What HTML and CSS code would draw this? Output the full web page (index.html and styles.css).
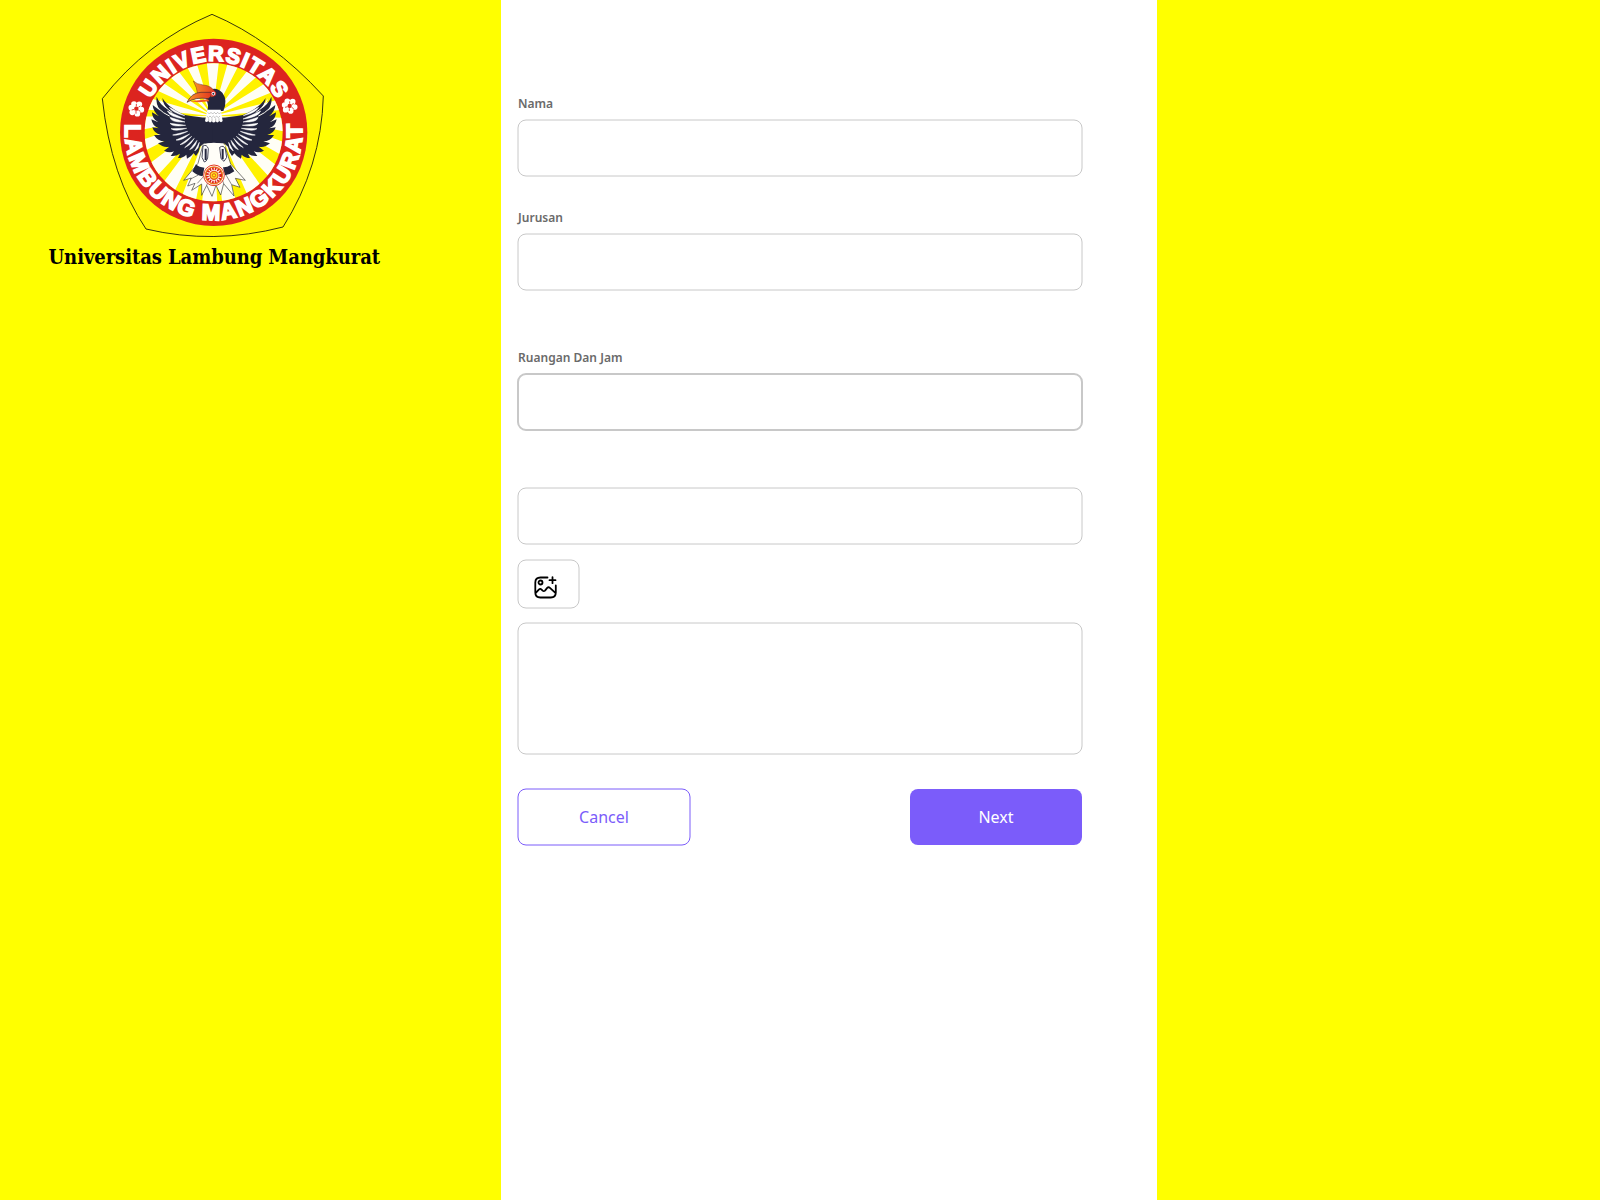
FILE: index.html
```html
<!DOCTYPE html>
<html lang="id">
<head>
<meta charset="utf-8">
<title>Universitas Lambung Mangkurat</title>
<link rel="stylesheet" href="styles.css">
</head>
<body>
<div class="page">
  <aside class="brand">
    <svg class="crest" viewBox="0 0 750 720" role="img" aria-label="Universitas Lambung Mangkurat">
      <defs>
        <path id="arc-top" d="M157 397a214 214 0 0 1 428 0"/>
        <path id="arc-bottom" d="M110 343A266 266 0 1 0 632 343"/>
        <clipPath id="disc"><circle cx="371" cy="397" r="207"/></clipPath>
        <linearGradient id="beak" x1="0" x2="1"><stop offset="0" stop-color="#f9922a"/><stop offset="1" stop-color="#e3391f"/></linearGradient>
        <g id="flower">
          <g fill="#fff">
            <circle cx="-7" cy="-14" r="8.5"/>
            <circle cx="9" cy="-13" r="8.5"/>
            <circle cx="15" cy="3" r="8.5"/>
            <circle cx="3" cy="15" r="8.5"/>
            <circle cx="-12" cy="11" r="8.5"/>
            <circle cx="-15" cy="-3" r="8.5"/>
            <circle r="12"/>
          </g>
          <path d="M0-14V-7M12-8L6-4M12 8L6 4M-1 15V7M-14 4L-6 2" stroke="#dc241f" stroke-width="2.5"/>
          <circle r="6.5" fill="#dc241f"/>
        </g>
        <g id="wing">
          <path d="M376 352C345 356 318 350 285 345C250 330 232 316 217 294Q219 312 233 328Q208 312 200 290Q196 310 211 332L188 315Q189 334 207 349L186 337Q186 357 205 367L184 358Q187 378 206 385L187 382Q192 400 212 405L192 405Q203 424 224 424L204 430Q220 444 238 440L222 452Q238 460 252 454L242 468Q258 470 270 461L264 474Q279 474 289 464L291 476Q304 470 311 460L318 468Q328 455 330 440L342 430H376Z" fill="#24263d"/>
          <g fill="#fff">
            <path d="M284 347L238 322Q246 338 284 347ZM285 357L232 333Q240 352 285 357ZM285 366L240 352Q242 368 285 366ZM287 376L240 370Q248 382 287 376ZM290 385L243 386Q255 396 290 385ZM293 394L248 405Q264 409 293 394ZM299 402L258 420Q273 424 299 402ZM305 409L270 434Q285 434 305 409ZM313 415L284 443Q301 438 313 415ZM321 421L299 449Q316 443 321 421ZM328 427L314 453Q327 446 328 427Z" stroke="#fff" stroke-width="1.5"/>
          </g>
          <path d="M212 300Q220 320 246 337M205 325Q220 340 238 348" fill="none" stroke="#fffef5" stroke-width="3" stroke-linecap="round"/>
        </g>
      </defs>
      <path d="M366 43Q545 118 700 288Q694 500 579 681Q370 735 168 687Q62 530 37 296Q170 125 366 43Z" fill="#fff600" stroke="#29290c" stroke-width="2.8"/>
      <circle cx="371" cy="397" r="281" fill="#dc241f"/>
      <circle cx="371" cy="397" r="207" fill="#fff200"/>
      <g clip-path="url(#disc)">
        <path fill="#fffef5" d="M368 348L344 130H393ZM368 348L430 130L472 145ZM368 348L508 165L545 190ZM368 348L573 220L600 255ZM368 348L620 285V326ZM368 348L620 354V403ZM368 348L620 440L600 480ZM368 348L585 516L560 555ZM368 348L525 575L480 602ZM368 348L445 630H399ZM368 348L383 630H333ZM368 348L312 630H260ZM368 348L240 600L207 565ZM368 348L185 545L160 505ZM368 348L140 465V425ZM368 348L130 394V350ZM368 348L130 325V280ZM368 348L140 243L163 211ZM368 348L190 185L223 158ZM368 348L261 143L302 130Z"/>
      </g>
      <path d="M340 430L324 490L281 541L304 534L293 558L315 550L305 571L335 552L335 586L350 556L366 589L378 556L392 585L401 551L432 588L425 554L450 562L436 535L466 541L422 492L400 425Z" fill="#fffef8" stroke="#3b3b3b" stroke-width="2"/>
      <path d="M318 493Q328 503 343 503L338 529Q322 527 307 514ZM399 502Q411 503 422 495L433 514Q420 524 405 526Z" fill="#24263d"/>
      <path d="M300 538L325 525M322 550L342 528M350 556L359 530M378 556L384 530M401 551L394 530M425 554L408 525" fill="none" stroke="#555" stroke-width="2"/>
      <use href="#wing"/>
      <use href="#wing" transform="matrix(-1 0 0 1 744 0)"/>
      <path d="M338 435Q371 422 406 435L403 470H341Z" fill="#fffef8"/>
      <path d="M339 438q11-6 16 8l-2 28q-4 12-10 12l-7-14ZM389 442q12-8 17 5l4 25-8 12-9-8Z" fill="#fff" stroke="#24263d" stroke-width="2.5"/>
      <path d="M347 446V480M398 447V478" stroke="#24263d" stroke-width="6"/>
      <path d="M360 270Q378 259 397 278Q414 300 400 333H352Q357 315 350 302L348 279Z" fill="#24263d"/>
      <path d="M310 243Q320 253 340 255Q366 257 377 279L367 291L323 282Q321 263 310 243Z" fill="url(#beak)" stroke="#703018" stroke-width="1.5"/>
      <path d="M291 307Q305 278 333 277L363 277Q367 290 354 296Q318 290 291 307Z" fill="url(#beak)" stroke="#3f2730" stroke-width="2"/>
      <path d="M300 304L354 298L358 304Q324 309 300 304Z" fill="#ed5725"/>
      <circle cx="370" cy="281" r="7" fill="#fff" stroke="#dc241f" stroke-width="3"/>
      <circle cx="370" cy="281" r="3" fill="#24263d"/>
      <path d="M352 329H392L398 363Q393 370 388 363Q382 371 377 364Q371 371 365 364Q360 371 355 363Q349 369 345 363Z" fill="#fff"/>
      <path d="M353 337l5 5 5-5 5 5 5-5 5 5 5-5 5 5 5-5M350 348l5 5 5-5 5 5 5-5 5 5 5-5 5 5 5-5M356 355v10M366 355v10M377 355v10M387 355v10" fill="none" stroke="#888" stroke-width="1.5"/>
      <circle cx="372" cy="526" r="31" fill="#fff" stroke="#e23a20" stroke-width="3"/>
      <circle cx="372" cy="526" r="25" fill="none" stroke="#ef7d21" stroke-width="5"/>
      <circle cx="372" cy="526" r="20" fill="none" stroke="#dc241f" stroke-width="8" stroke-dasharray="5 3"/>
      <circle cx="372" cy="526" r="12" fill="#ffdc26" stroke="#e65a20" stroke-width="4"/>
      <circle cx="372" cy="526" r="5" fill="#fff200" stroke="#dc241f" stroke-width="2"/>
      <use href="#flower" x="139" y="326"/>
      <use href="#flower" x="599" y="318"/>
      <g class="crest-text">
        <text font-size="64" text-anchor="middle" textLength="464"><textPath href="#arc-top" startOffset="50%" textLength="464">UNIVERSITAS</textPath></text>
        <text font-size="67" text-anchor="middle" textLength="880"><textPath href="#arc-bottom" startOffset="50%" textLength="880">LAMBUNG MANGKURAT</textPath></text>
      </g>
    </svg>
    <h1 class="brand-name">Universitas Lambung Mangkurat</h1>
  </aside>
  <main class="panel">
    <form class="form">
      <label class="field"><span class="label">Nama</span><input class="box" type="text"></label>
      <label class="field"><span class="label">Jurusan</span><input class="box" type="text"></label>
      <label class="field room"><span class="label">Ruangan Dan Jam</span><input class="box strong" type="text"></label>
      <input class="box extra" type="text" aria-label="Jam">
      <button class="box upload" type="button" aria-label="Tambah gambar">
        <svg class="upload-icon" viewBox="0 0 24 24">
          <path d="M14 2H7Q1.8 2 1.8 7v10q0 5 5 5h10.500q5 0 5-5V10M19 1.700v6M16 4.700h6M2.300 17.300l3-3.200q1.400-1.400 2.800 0l1 1q1.200 1 2.400 0l2.200-2.700q1.300-1.300 2.700 0l5.500 5"/>
          <circle cx="7" cy="7" r="2"/>
        </svg>
      </button>
      <textarea class="box notes" aria-label="Keterangan"></textarea>
      <div class="actions">
        <button class="button cancel" type="button">Cancel</button>
        <button class="button next" type="button">Next</button>
      </div>
    </form>
  </main>
</div>
</body>
</html>
```

FILE: styles.css
```css
*,
*::before {
  box-sizing: border-box;
}

body {
  margin: 0;
  background: #ff0;
  font-family: "Noto Sans", sans-serif;
}

.page {
  display: flex;
  height: 1200px;
  overflow: hidden;
}

.brand {
  width: 501px;
  flex: none;
}

.crest {
  display: block;
  width: 250px;
  height: 240px;
  margin-left: 90px;
}

.crest-text {
  font-family: "Liberation Sans", Arial, sans-serif;
  font-weight: 700;
  fill: #fff;
  stroke: #fff;
  stroke-width: 5px;
}

.brand-name {
  margin: 1px 0 0 48.5px;
  font: 700 20px/32px "DejaVu Serif Condensed", "DejaVu Serif", serif;
  font-stretch: condensed;
  letter-spacing: -0.07px;
  white-space: nowrap;
  color: #000;
}

.panel {
  width: 656px;
  flex: none;
  padding: 95px 74px 0 16px;
  background: #fff;
}

.form {
  display: flex;
  flex-direction: column;
  width: 566px;
}

.field {
  display: block;
  height: 114px;
}

.field.room {
  margin-top: 26px;
}

.label {
  display: block;
  height: 24px;
  padding-left: 1px;
  font-size: 12px;
  line-height: 18px;
  font-weight: 600;
  letter-spacing: 0.02px;
  color: #6a6a6a;
}

.box {
  display: block;
  width: 565px;
  height: 57px;
  margin: 0;
  padding: 0;
  border: 1px solid #c8c8c8;
  border-radius: 8.5px;
  background: #fff;
  outline: none;
  resize: none;
  transform: translate(0.5px, 0.5px);
}

.box.strong {
  width: 566px;
  height: 58px;
  border: 2px solid #c8c8c8;
  border-radius: 9px;
  transform: none;
}

.extra {
  margin-top: 24px;
}

.upload {
  display: flex;
  align-items: flex-start;
  width: 62px;
  height: 49px;
  margin-top: 15px;
  padding: 15px 0 0 15px;
}

.upload-icon {
  display: block;
  flex: none;
  width: 24px;
  height: 24px;
  fill: none;
  stroke: #000;
  stroke-width: 1.8;
  stroke-linecap: round;
  stroke-linejoin: round;
}

.notes {
  height: 132px;
  margin-top: 14px;
}

.actions {
  display: flex;
  justify-content: space-between;
  margin: 35px 1px 0;
}

.button {
  position: relative;
  width: 172px;
  height: 56px;
  padding: 0;
  border: 0;
  border-radius: 8px;
  font: 400 16px/24px "Noto Sans", sans-serif;
}

.cancel {
  background: #fff;
  color: #7b5cfa;
}

.cancel::before {
  content: "";
  position: absolute;
  top: -1px;
  left: -1px;
  width: 173px;
  height: 57px;
  border: 1px solid #7b5cfa;
  border-radius: 8.5px;
  transform: translate(0.5px, 0.5px);
}

.next {
  background: #7b5cfa;
  color: #fff;
}
```
